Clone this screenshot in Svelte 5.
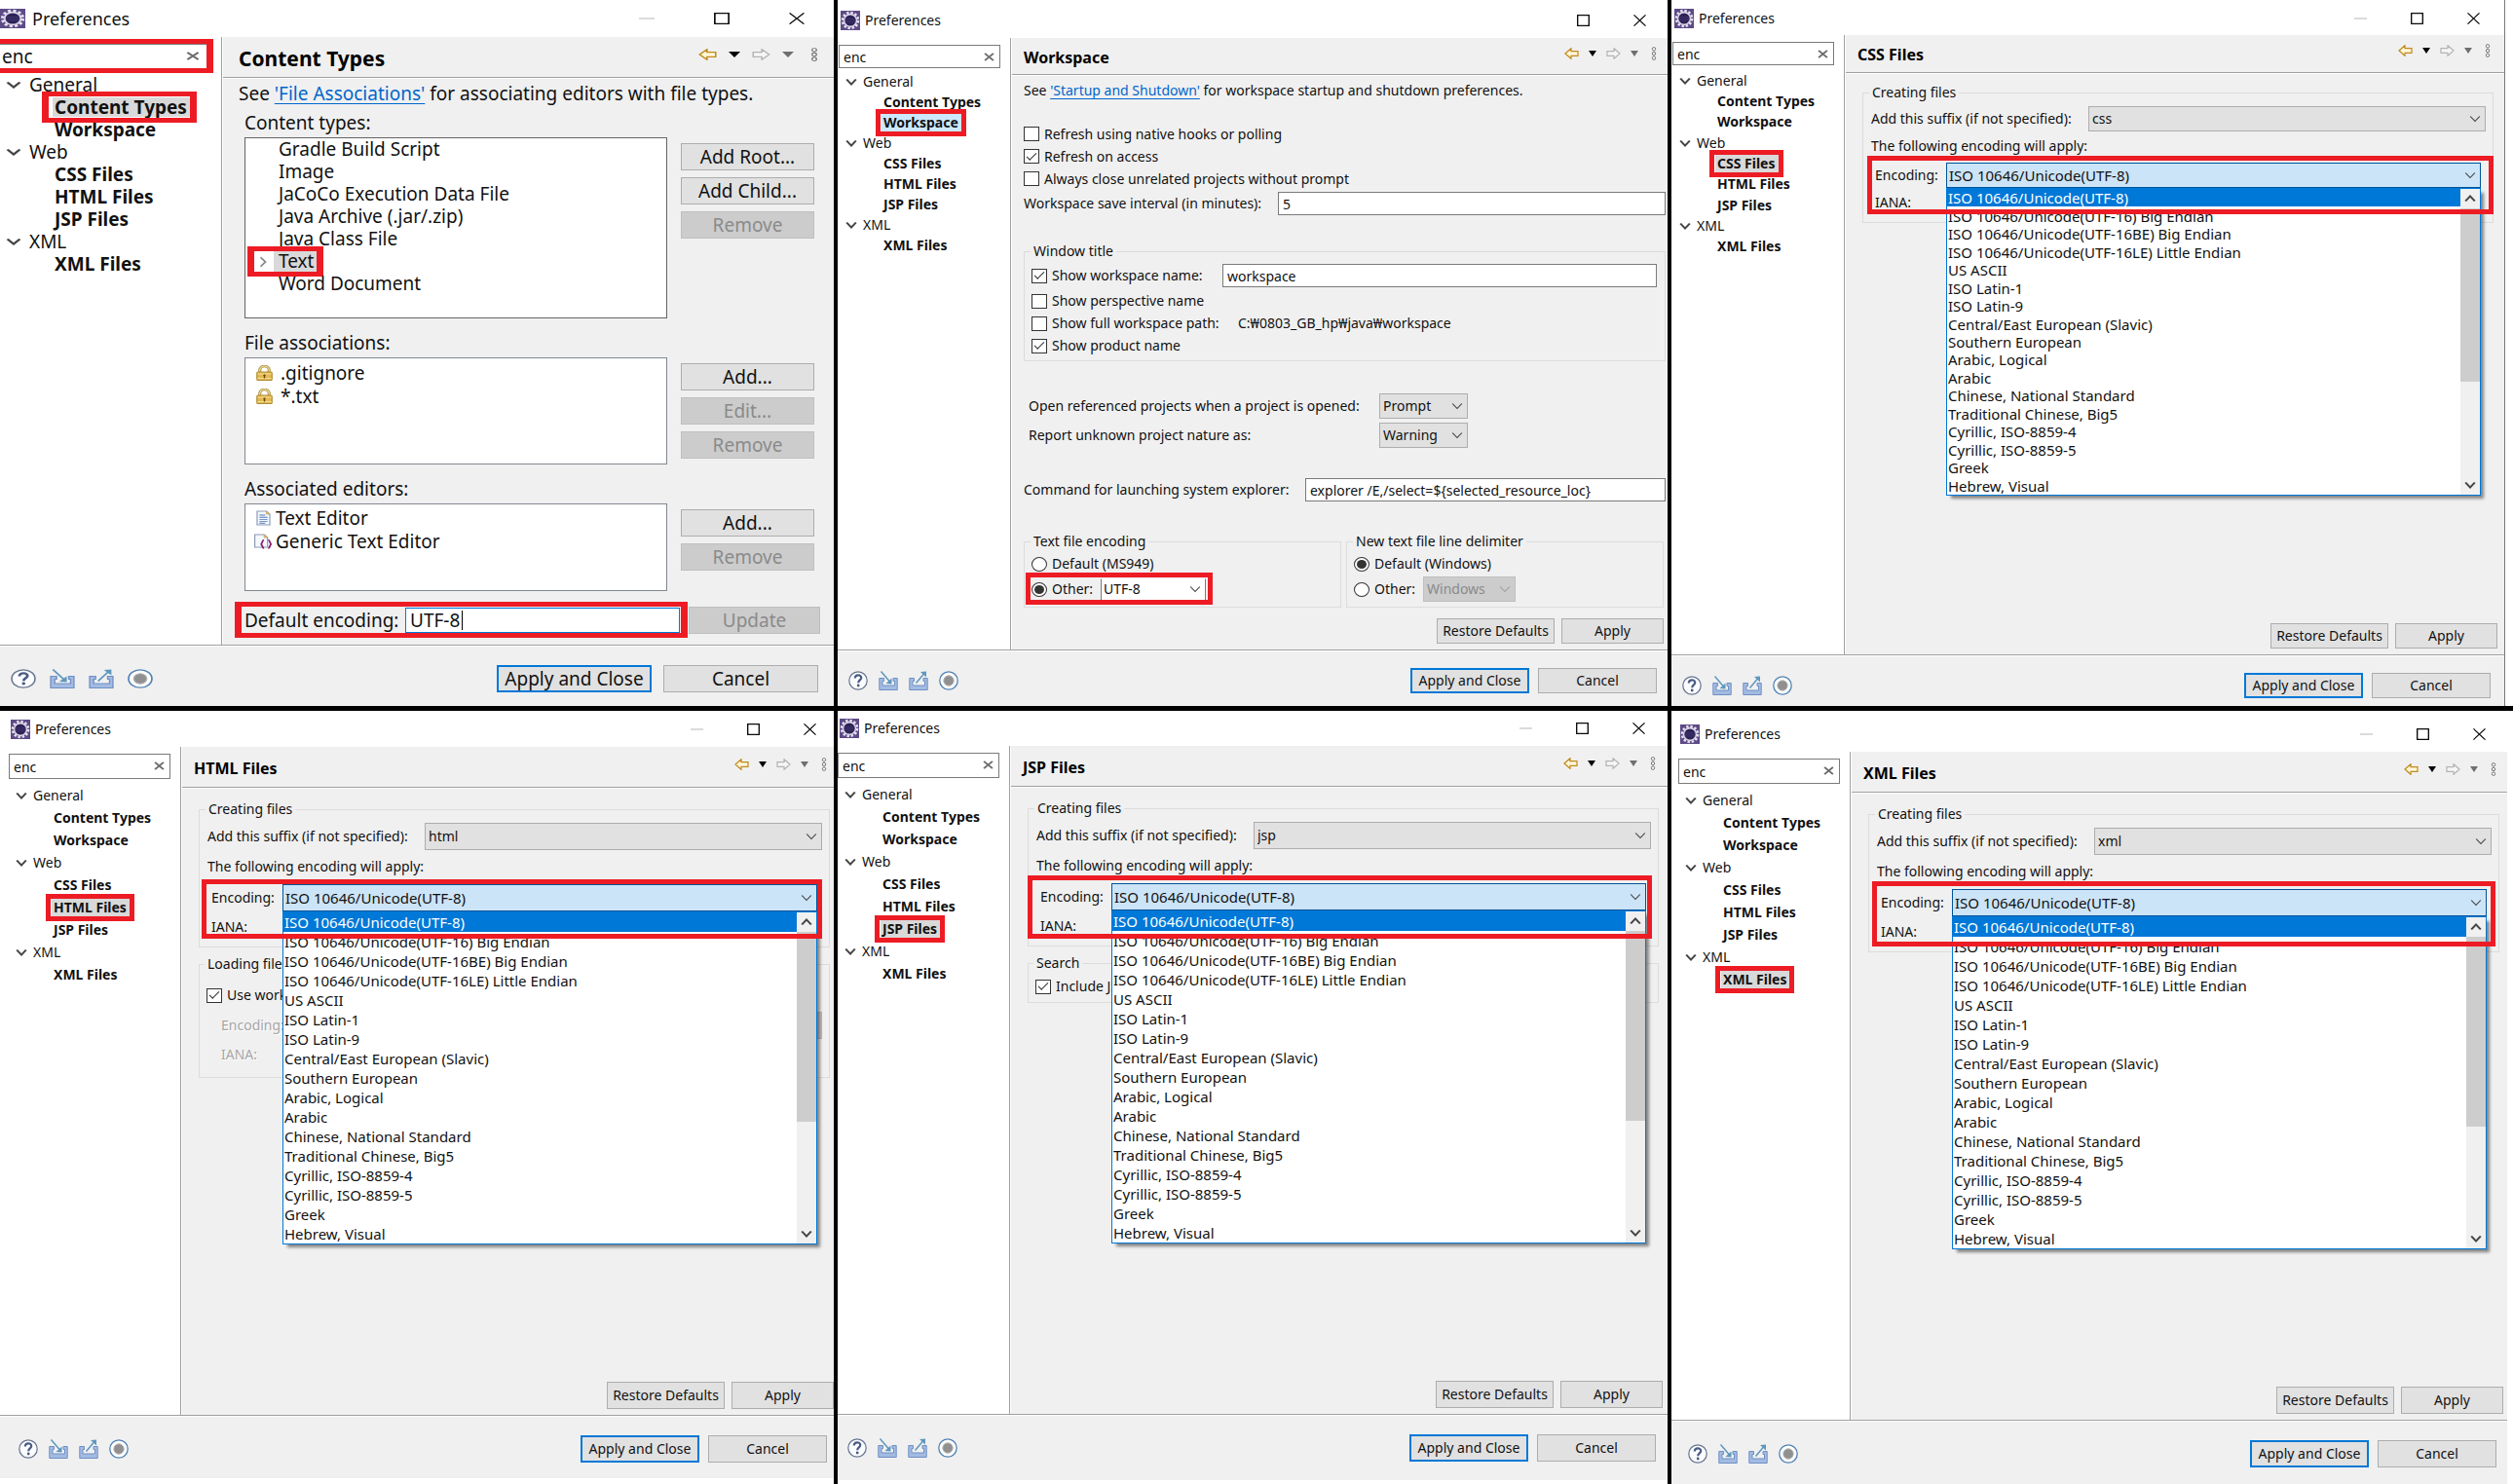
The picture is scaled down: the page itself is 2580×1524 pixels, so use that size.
<script lang="ts">
  type PageKind = 'content-types' | 'workspace' | 'files';

  interface Win {
    id: string;
    title: string;
    kind: PageKind;
    suffix?: string;
    extra?: 'loading' | 'search';
    minimize?: boolean;
  }

  const windows: Win[] = [
    { id: 'types', title: 'Content Types', kind: 'content-types', minimize: true },
    { id: 'workspace', title: 'Workspace', kind: 'workspace' },
    { id: 'css', title: 'CSS Files', kind: 'files', suffix: 'css', minimize: true },
    { id: 'html', title: 'HTML Files', kind: 'files', suffix: 'html', extra: 'loading', minimize: true },
    { id: 'jsp', title: 'JSP Files', kind: 'files', suffix: 'jsp', extra: 'search', minimize: true },
    { id: 'xml', title: 'XML Files', kind: 'files', suffix: 'xml', minimize: true },
  ];

  const tree = [
    { name: 'General', children: ['Content Types', 'Workspace'] },
    { name: 'Web', children: ['CSS Files', 'HTML Files', 'JSP Files'] },
    { name: 'XML', children: ['XML Files'] },
  ];

  const contentTypes = [
    'Gradle Build Script',
    'Image',
    'JaCoCo Execution Data File',
    'Java Archive (.jar/.zip)',
    'Java Class File',
    'Text',
    'Word Document',
  ];

  const encodings = [
    'ISO 10646/Unicode(UTF-8)',
    'ISO 10646/Unicode(UTF-16) Big Endian',
    'ISO 10646/Unicode(UTF-16BE) Big Endian',
    'ISO 10646/Unicode(UTF-16LE) Little Endian',
    'US ASCII',
    'ISO Latin-1',
    'ISO Latin-9',
    'Central/East European (Slavic)',
    'Southern European',
    'Arabic, Logical',
    'Arabic',
    'Chinese, National Standard',
    'Traditional Chinese, Big5',
    'Cyrillic, ISO-8859-4',
    'Cyrillic, ISO-8859-5',
    'Greek',
    'Hebrew, Visual',
  ];
</script>

{#snippet chevron(cls: string)}
  <svg class="chevron {cls}" viewBox="0 0 10 10" preserveAspectRatio="none" aria-hidden="true">
    <path d="M1 2.5 5 7.5 9 2.5" fill="none" stroke="currentColor" />
  </svg>
{/snippet}

{#snippet appIcon()}
  <svg class="app-icon" viewBox="0 0 20 20" preserveAspectRatio="none" aria-hidden="true">
    <rect width="20" height="20" fill="#5d4a86" />
    <circle cx="10" cy="10" r="8" fill="none" stroke="#e6e2ee" stroke-width="2.6" stroke-dasharray="2.4 1.8" />
    <circle cx="10" cy="10" r="6.4" fill="#2c2255" stroke="#dcd6ea" stroke-width="1.6" />
    <path d="M4.6 8.4h10.8M4.2 10.2h11.6M4.6 12h10.8" stroke="#463a73" stroke-width=".7" />
  </svg>
{/snippet}

{#snippet select(id: string, value: string, cls: string, disabled: boolean)}
  <span class="select {cls}" class:disabled>
    <select {id} {disabled}><option>{value}</option></select>
    {@render chevron('drop')}
  </span>
{/snippet}

{#snippet lock()}
  <svg class="file-icon" viewBox="0 0 16 16" preserveAspectRatio="none" aria-hidden="true">
    <path d="M4 8V5a4 4 0 0 1 8 0v3" fill="none" stroke="#a98c3b" stroke-width="2.6" />
    <path d="M4 8V5a4 4 0 0 1 8 0v3" fill="none" stroke="#f3e3a4" stroke-width="1" />
    <rect x="1.5" y="7" width="13" height="8.5" rx="1" fill="#e3b94f" stroke="#b08a35" />
    <path d="M2 9h12M2 13.5h12" stroke="#f6df93" />
    <path d="M8 9.5v4M7 10.5h2" stroke="#6b4a10" stroke-width="1.2" />
  </svg>
{/snippet}

{#snippet textFile()}
  <svg class="file-icon" viewBox="0 0 16 16" preserveAspectRatio="none" aria-hidden="true">
    <path d="M2.5 1h8l3 3v11h-11z" fill="#f4f8ff" stroke="#8d9cb5" />
    <path d="M10.5 1v3h3z" fill="#e6c679" stroke="#b9984f" stroke-width=".6" />
    <path d="M4.5 5h5M4.5 7.2h7M4.5 9.4h7M4.5 11.6h7M4.5 13.3h5" stroke="#4c78b8" stroke-width=".9" />
  </svg>
{/snippet}

{#snippet genericFile()}
  <svg class="file-icon" viewBox="0 0 16 16" preserveAspectRatio="none" aria-hidden="true">
    <path d="M.5 1h8l3 3v10h-11z" fill="#f4f8ff" stroke="#8d9cb5" />
    <path d="M8.5 1v3h3z" fill="#e6c679" stroke="#b9984f" stroke-width=".6" />
    <path
      d="M8.5 6.5c-2 0-1 4-3 4.300 2 .2 1 4.200 3 4.200M12 6.500c2 0 1 4 3 4.300-2 .2-1 4.200-3 4.200"
      fill="none"
      stroke="#8a1f6c"
      stroke-width="1.6"
    />
  </svg>
{/snippet}

{#snippet footerIcons()}
  <div class="footer-icons">
    <svg viewBox="0 0 20 20" preserveAspectRatio="none" aria-hidden="true">
      <circle cx="10" cy="10" r="9.2" fill="#fbfcfe" stroke="#66748f" stroke-width="1.2" />
      <path d="M6.8 7.6c0-4.4 6.6-4.2 6.4-.5-.1 2.2-3 2.5-3 5.2" fill="none" stroke="#4a5c85" stroke-width="2.2" />
      <circle cx="10.2" cy="15" r="1.4" fill="#4a5c85" />
    </svg>
    <svg viewBox="0 0 20 20" preserveAspectRatio="none" aria-hidden="true">
      <path d="M.8 7.5h4.700v3h-1.500v4.500h12.500v-4.500H15v-3h4.200v12H.8z" fill="#a3bbe2" stroke="#6f8fc4" />
      <path d="M2.5.5 11.5 11" stroke="#5e97bd" stroke-width="1.5" />
      <path d="M13.5 13.5v-6l-6 5.500z" fill="#5e97bd" />
    </svg>
    <svg viewBox="0 0 20 20" preserveAspectRatio="none" aria-hidden="true">
      <path d="M.8 7.5h4.700v3h-1.500v4.500h12.500v-4.500H15v-3h4.200v12H.8z" fill="#a3bbe2" stroke="#6f8fc4" />
      <path d="M7.5 12.5 15.5 3" stroke="#5e97bd" stroke-width="1.5" />
      <path d="M18 .5v6L12 1z" fill="#5e97bd" />
    </svg>
    <svg viewBox="0 0 20 20" preserveAspectRatio="none" aria-hidden="true">
      <circle cx="10" cy="10" r="9.2" fill="#fff" stroke="#4f82b3" stroke-width="1.3" />
      <circle cx="10" cy="10" r="5.2" fill="#909090" stroke="#b4b4b4" />
    </svg>
  </div>
{/snippet}

{#snippet contentTypesPage()}
  <div class="types-page">
    <p class="hint">See <a href="#file-associations">'File Associations'</a> for associating editors with file types.</p>

    <div class="section">
      <h3>Content types:</h3>
      <ul class="list types-list">
        {#each contentTypes as type}
          <li class:picked={type === 'Text'}>
            {#if type === 'Text'}{@render chevron('closed')}{/if}
            <span>{type}</span>
          </li>
        {/each}
      </ul>
      <div class="side-buttons">
        <button>Add Root...</button>
        <button>Add Child...</button>
        <button disabled>Remove</button>
      </div>
    </div>

    <div class="section">
      <h3>File associations:</h3>
      <ul class="list associations">
        <li>{@render lock()}<span>.gitignore</span></li>
        <li>{@render lock()}<span>*.txt</span></li>
      </ul>
      <div class="side-buttons">
        <button>Add...</button>
        <button disabled>Edit...</button>
        <button disabled>Remove</button>
      </div>
    </div>

    <div class="section">
      <h3>Associated editors:</h3>
      <ul class="list editors">
        <li>{@render textFile()}<span>Text Editor</span></li>
        <li>{@render genericFile()}<span>Generic Text Editor</span></li>
      </ul>
      <div class="side-buttons">
        <button>Add...</button>
        <button disabled>Remove</button>
      </div>
    </div>

    <div class="default-encoding">
      <div class="encoding-entry">
        <label for="default-encoding">Default encoding:</label>
        <input id="default-encoding" type="text" value="UTF-8" />
        <i class="caret"></i>
      </div>
      <button disabled>Update</button>
    </div>
  </div>
{/snippet}

{#snippet workspacePage()}
  <div class="workspace-page">
    <p class="hint">
      See <a href="#startup">'Startup and Shutdown'</a> for workspace startup and shutdown preferences.
    </p>

    <div class="checks">
      <label><input type="checkbox" />Refresh using native hooks or polling</label>
      <label><input type="checkbox" checked />Refresh on access</label>
      <label><input type="checkbox" />Always close unrelated projects without prompt</label>
    </div>
    <div class="field save">
      <label for="save-interval">Workspace save interval (in minutes):</label>
      <input id="save-interval" type="text" value="5" />
    </div>

    <fieldset class="window-title">
      <legend>Window title</legend>
      <div class="field">
        <label><input type="checkbox" checked />Show workspace name:</label>
        <input type="text" value="workspace" aria-label="Workspace name" />
      </div>
      <label><input type="checkbox" />Show perspective name</label>
      <div class="path">
        <label><input type="checkbox" />Show full workspace path:</label>
        <span>C:₩0803_GB_hp₩java₩workspace</span>
      </div>
      <label><input type="checkbox" checked />Show product name</label>
    </fieldset>

    <div class="choices">
      <label for="open-referenced">Open referenced projects when a project is opened:</label>
      {@render select('open-referenced', 'Prompt', '', false)}
      <label for="unknown-nature">Report unknown project nature as:</label>
      {@render select('unknown-nature', 'Warning', '', false)}
    </div>

    <div class="field command">
      <label for="explorer">Command for launching system explorer:</label>
      <input id="explorer" type="text" value={'explorer /E,/select=${selected_resource_loc}'} />
    </div>

    <div class="pair">
      <fieldset>
        <legend>Text file encoding</legend>
        <label><input type="radio" name="encoding" />Default (MS949)</label>
        <div class="other marked">
          <label><input type="radio" name="encoding" checked />Other:</label>
          {@render select('text-encoding', 'UTF-8', 'white', false)}
        </div>
      </fieldset>
      <fieldset>
        <legend>New text file line delimiter</legend>
        <label><input type="radio" name="delimiter" checked />Default (Windows)</label>
        <div class="other">
          <label><input type="radio" name="delimiter" />Other:</label>
          {@render select('delimiter', 'Windows', '', true)}
        </div>
      </fieldset>
    </div>
  </div>
{/snippet}

{#snippet filesPage(win: Win)}
  <div class="files-page">
    <fieldset class="creating">
      <legend>Creating files</legend>
      <div class="suffix-row">
        <label for="suffix-{win.id}">Add this suffix (if not specified):</label>
        {@render select(`suffix-${win.id}`, win.suffix ?? '', '', false)}
      </div>
      <p>The following encoding will apply:</p>
      <div class="encoding">
        <label for="encoding-{win.id}">Encoding:</label>
        <div class="combo">
          {@render select(`encoding-${win.id}`, encodings[0], 'open', false)}
          <div class="popup">
            <ul>
              {#each encodings as encoding, i}
                <li class:current={i === 0}>{encoding}</li>
              {/each}
            </ul>
            <div class="scrollbar">
              {@render chevron('up')}
              <div class="track"><div class="thumb"></div></div>
              {@render chevron('down')}
            </div>
          </div>
        </div>
        <span class="iana">IANA:</span>
      </div>
    </fieldset>

    {#if win.extra === 'loading'}
      <fieldset class="loading">
        <legend>Loading files</legend>
        <label><input type="checkbox" checked />Use workspace encoding</label>
        <div class="off">
          <label for="load-encoding">Encoding:</label>
          {@render select('load-encoding', '', '', true)}
        </div>
        <div class="off">IANA:</div>
      </fieldset>
    {:else if win.extra === 'search'}
      <fieldset class="search-group">
        <legend>Search</legend>
        <label><input type="checkbox" checked />Include JSP matches</label>
      </fieldset>
    {/if}
  </div>
{/snippet}

<main class="board">
  {#each windows as win}
    <section class="cell {win.id}">
      <div class="window">
        <header class="titlebar">
          {@render appIcon()}
          <span>Preferences</span>
          <div class="controls">
            {#if win.minimize}
              <svg viewBox="0 0 13 13" preserveAspectRatio="none"><path d="M0 6.5h13" stroke="#b4b4b4" /></svg>
            {/if}
            <svg viewBox="0 0 13 13" preserveAspectRatio="none">
              <rect x=".7" y=".7" width="11.6" height="11.6" fill="none" stroke="#000" stroke-width="1.3" />
            </svg>
            <svg viewBox="0 0 13 13" preserveAspectRatio="none">
              <path d="M.5.5l12 12M12.5.5l-12 12" stroke="#000" stroke-width="1.2" />
            </svg>
          </div>
        </header>

        <div class="body">
          <nav class="sidebar">
            <div class="search">
              <input type="text" value="enc" aria-label="Filter" />
              <svg class="clear" viewBox="0 0 10 10" preserveAspectRatio="none">
                <path d="M1 1l8 8M9 1 1 9" stroke="#6d6d6d" stroke-width="1.8" />
              </svg>
            </div>
            <ul class="tree">
              {#each tree as group}
                <li class="group">{@render chevron('open-node')}{group.name}</li>
                {#each group.children as child}
                  <li class="leaf"><span class:selected={child === win.title}>{child}</span></li>
                {/each}
              {/each}
            </ul>
          </nav>

          <div class="page">
            <div class="page-head">
              <h2>{win.title}</h2>
              <div class="toolbar">
                <svg class="arrow" viewBox="0 0 15 12" preserveAspectRatio="none">
                  <path d="M1 6 7 .7v2.900h7v4.800H7v2.900z" fill="#fff6d8" stroke="#c08a1e" stroke-width="1.2" />
                </svg>
                <svg class="tri" viewBox="0 0 8 6" preserveAspectRatio="none"><path d="M0 0h8L4 6z" fill="#000" /></svg>
                <svg class="arrow" viewBox="0 0 15 12" preserveAspectRatio="none">
                  <path d="M14 6 8 .7v2.900H1v4.800h7v2.900z" fill="#f6f6f6" stroke="#b4b4b4" stroke-width="1.2" />
                </svg>
                <svg class="tri" viewBox="0 0 8 6" preserveAspectRatio="none"><path d="M0 0h8L4 6z" fill="#6f6f6f" /></svg>
                <svg class="dots" viewBox="0 0 6 14" preserveAspectRatio="none">
                  <g fill="#fff" stroke="#666" stroke-width=".9">
                    <circle cx="3" cy="2.3" r="1.7" />
                    <circle cx="3" cy="7" r="1.7" />
                    <circle cx="3" cy="11.7" r="1.7" />
                  </g>
                </svg>
              </div>
            </div>

            {#if win.kind === 'content-types'}
              {@render contentTypesPage()}
            {:else}
              {#if win.kind === 'workspace'}
                {@render workspacePage()}
              {:else}
                {@render filesPage(win)}
              {/if}
              <div class="page-buttons">
                <button class="restore">Restore Defaults</button>
                <button class="apply">Apply</button>
              </div>
            {/if}
          </div>
        </div>

        <footer>
          <div class="footer-row">
            {@render footerIcons()}
            <button class="default">Apply and Close</button>
            <button>Cancel</button>
          </div>
        </footer>
      </div>
    </section>
  {/each}
</main>

<style>
  :global(body) {
    margin: 0;
    background: #000;
  }

  .board {
    display: grid;
    grid-template-columns: 856fr 852fr 864fr;
    grid-template-rows: 725fr 794fr;
    gap: 5px 4px;
    min-height: 100vh;
    font-family: "Noto Sans", "Open Sans", sans-serif;
    color: #111;
  }

  .board *,
  .board *::after,
  .board *::before {
    box-sizing: border-box;
  }

  ul,
  p,
  h2,
  h3,
  fieldset {
    margin: 0;
    padding: 0;
    list-style: none;
  }

  /* shared metrics, then the ones each window overrides */
  .cell {
    --font: 14px;
    --head-font: 16px;
    --top: 0px;
    --shift: 0px;
    --edge: 11px;
    --bar: 36px;
    --head: 42px;
    --tree: 207px;
    --tree-gap: 5px;
    --ctl: 28px;
    --search: 26px;
    --side: 178px;
    --foot: 71px;
    --icon: 20px;
    --note: 33px;
    --iana: 31px;
    --popup: 342px;
    --red: #ed1c24;
    display: flex;
    min-width: 0;
    background: #fff;
    font-size: var(--font);
    line-height: 20px;
  }

  .cell.types {
    --font: 19px;
    --head-font: 21px;
    --edge: 16px;
    --bar: 38px;
    --search: 25px;
    --side: 228px;
    --foot: 62px;
    --icon: 26px;
  }

  .cell.workspace {
    --top: 3px;
    --head: 38px;
    --tree: 189px;
    --tree-gap: 3px;
    --ctl: 26px;
    --search: 24px;
    --foot: 57px;
  }

  .cell.css {
    --top: 1px;
    --edge: 14px;
    --bar: 35px;
    --head: 39px;
    --tree: 192px;
    --ctl: 26px;
    --search: 24px;
    --foot: 52px;
    --note: 30px;
    --iana: 30px;
    --popup: 316px;
    padding-right: 8px;
  }

  .cell.html {
    --top: 1px;
    --shift: 8px;
    --edge: 7px;
    --foot: 70px;
  }

  .cell.jsp {
    --shift: -1px;
    --edge: 12px;
  }

  .cell.xml {
    --top: 6px;
    --shift: 6px;
    --foot: 65px;
    padding-right: 6px;
  }

  .css .window {
    border-right: 1px solid #777;
  }

  .window {
    display: flex;
    flex-direction: column;
    flex: 1;
    min-width: 0;
    padding-top: var(--top);
    overflow: hidden;
  }

  .titlebar {
    display: flex;
    align-items: center;
    height: var(--bar);
    padding: 0 calc(var(--edge) + 11px) 0 calc(var(--shift) + 3px);
  }

  .types .titlebar {
    padding: 0 30px 0 0;
    font-size: 18px;
  }

  .app-icon {
    width: var(--icon);
    height: 20px;
    margin-right: 5px;
  }

  .types .app-icon {
    margin-right: 7px;
  }

  .controls {
    display: flex;
    gap: 45px;
    margin-left: auto;
  }

  .controls svg {
    width: 13px;
    height: 12px;
  }

  .types .controls {
    gap: 61px;
  }

  .types .controls svg {
    width: 16px;
  }

  .body {
    display: flex;
    flex: 1;
    min-height: 0;
    border-bottom: 1px solid #a0a0a0;
  }

  .sidebar {
    flex: none;
    width: calc(var(--side) + var(--shift));
    padding: 7px 10px 0 calc(var(--shift) + 1px);
    border-right: 1px solid #a0a0a0;
  }

  .types .sidebar {
    padding: 7px 15px 0 0;
  }

  .search {
    position: relative;
    margin-bottom: var(--tree-gap);
  }

  .search input {
    display: block;
    width: 100%;
    padding: 0 4px;
  }

  .types .search input {
    border-width: 1px 0 0;
    padding: 0 2px;
  }

  .types .search::after {
    content: "";
    position: absolute;
    inset: -5px -7px -5px 0;
    border: 5px solid var(--red);
    border-width: 5px 7px 5px 0;
  }

  .clear {
    position: absolute;
    top: 8px;
    right: 6px;
    width: 11px;
    height: 9px;
  }

  .types .clear {
    right: 7px;
    width: 14px;
  }

  .tree {
    display: grid;
    grid-auto-rows: 1fr;
    height: var(--tree);
  }

  .tree li {
    display: flex;
    align-items: center;
  }

  .group {
    gap: 6px;
    padding-left: 7px;
  }

  .types .group {
    gap: 8px;
    padding-left: 6px;
  }

  .leaf {
    padding-left: 44px;
    font-weight: 700;
    white-space: nowrap;
  }

  .types .leaf {
    padding-left: 54px;
  }

  .leaf span {
    position: relative;
    padding: 0 3px 0 2px;
  }

  .leaf .selected {
    z-index: 1;
    background: #d9d9d9;
  }

  .workspace .leaf .selected {
    background: #cce8ff;
  }

  .leaf .selected::after {
    content: "";
    position: absolute;
    inset: -4px -5px -4px -6px;
    border: 5px solid var(--red);
  }

  .types .leaf .selected::after {
    inset: -6px -7px -6px -11px;
    border-width: 5px 7px;
  }

  .chevron {
    flex: none;
    width: 12px;
    height: 10px;
    color: #444;
  }

  .open-node {
    stroke-width: 1.8;
  }

  .types .open-node {
    width: 16px;
  }

  .closed {
    color: #8a8a8a;
    stroke-width: 1.6;
    transform: rotate(-90deg);
  }

  .up {
    transform: rotate(180deg);
  }

  .up,
  .down {
    margin: 5px 4px;
    stroke-width: 1.8;
  }

  .page {
    display: flex;
    flex-direction: column;
    flex: 1;
    min-width: 0;
    background: #f0f0f0;
    border-left: 1px solid #fff;
  }

  .page-head {
    display: flex;
    align-items: center;
    flex: none;
    height: var(--head);
    padding: 2px var(--edge) 0 12px;
    border-bottom: 1px solid #a0a0a0;
    box-shadow: 0 1px 0 #fff;
  }

  .types .page-head {
    padding-left: 16px;
  }

  h2 {
    font-size: var(--head-font);
    font-weight: 700;
    color: #000;
  }

  .toolbar {
    display: flex;
    align-items: center;
    gap: 10px;
    margin: 0 0 8px auto;
  }

  .types .toolbar {
    gap: 12px;
  }

  .arrow {
    width: 15px;
    height: 12px;
  }

  .tri {
    width: 8px;
    height: 6px;
  }

  .dots {
    width: 6px;
    height: 14px;
    margin-left: 3px;
  }

  .types .arrow {
    width: 19px;
  }

  .types .tri {
    width: 12px;
  }

  .types .dots {
    width: 8px;
    margin-left: 5px;
  }

  /* controls */
  input,
  select,
  button {
    font: inherit;
    color: #111;
  }

  input[type="text"] {
    min-width: 0;
    height: 24px;
    padding: 0 4px;
    border: 1px solid #7a7a7a;
    border-radius: 0;
    background: #fff;
    outline: none;
  }

  .search input[type="text"] {
    height: var(--search);
  }

  input[type="checkbox"],
  input[type="radio"] {
    appearance: none;
    display: grid;
    place-items: center;
    flex: none;
    width: 16px;
    height: 15px;
    margin: 0 5px 0 0;
    border: 1px solid #333;
    background: #fff;
  }

  input[type="radio"] {
    border-radius: 50%;
  }

  input[type="radio"]:checked::before {
    content: "";
    width: 10px;
    height: 9px;
    border-radius: 50%;
    background: #333;
  }

  input[type="checkbox"]:checked::before {
    content: "";
    width: 10px;
    height: 5px;
    margin-bottom: 3px;
    border: solid #333;
    border-width: 0 0 1px 1px;
    transform: rotate(-45deg);
  }

  label {
    display: flex;
    align-items: center;
    white-space: nowrap;
  }

  button {
    height: var(--ctl);
    padding: 0;
    border: 1px solid #adadad;
    border-radius: 0;
    background: #e1e1e1;
    white-space: nowrap;
  }

  button:disabled {
    border-color: #bfbfbf;
    background: #ccc;
    color: #8a8a8a;
  }

  .select {
    position: relative;
    display: flex;
    min-width: 0;
  }

  .select select {
    appearance: none;
    width: 100%;
    height: var(--ctl);
    padding: 0 3px;
    border: 1px solid #adadad;
    border-radius: 0;
    background: #e1e1e1;
  }

  .select select:disabled {
    border-color: #bfbfbf;
    background: #ccc;
    color: #8a8a8a;
    opacity: 1;
  }

  .select.open select {
    padding: 0 2px;
    border-color: #005499;
    background: #cce4f7;
    font-size: 15px;
  }

  .select.white select {
    height: 23px;
    padding: 0 2px;
    border-color: #fff #7a7a7a;
    background: #fff;
  }

  .drop {
    position: absolute;
    top: calc(50% - 5px);
    right: 5px;
  }

  .disabled .drop {
    color: #a0a0a0;
  }

  fieldset {
    min-width: 0;
    border: 1px solid #dcdcdc;
  }

  legend {
    padding: 0 3px;
    line-height: 20px;
  }

  a {
    color: #0066cc;
    text-underline-offset: 3px;
  }

  .hint {
    line-height: 24px;
    white-space: nowrap;
  }

  /* Content Types */
  .types-page {
    padding: 4px 20px 0 22px;
  }

  .types-page .hint {
    margin-left: -6px;
    margin-bottom: 6px;
  }

  .section {
    display: grid;
    grid-template-columns: 1fr 137px;
    column-gap: 14px;
    row-gap: 3px;
    margin-bottom: 13px;
  }

  h3 {
    grid-column: 1 / -1;
    font-size: var(--font);
    font-weight: 400;
    line-height: 24px;
  }

  .list {
    border: 1px solid #828790;
    background: #fff;
  }

  .list li {
    display: flex;
    align-items: center;
    height: 24px;
  }

  .types-list {
    height: 186px;
    border-color: #646464;
  }

  .types-list li {
    position: relative;
    width: max-content;
    height: 23px;
    padding-left: 29px;
  }

  .types-list span {
    padding: 0 5px;
    line-height: 21px;
  }

  .types-list .picked span {
    background: #d9d9d9;
  }

  .picked .chevron {
    position: absolute;
    left: 12px;
  }

  .picked::after {
    content: "";
    position: absolute;
    inset: -4px -5px -4px 2px;
    border: 5px solid var(--red);
    border-width: 5px 7px;
  }

  .associations {
    height: 110px;
    padding: 3px 10px;
  }

  .associations li {
    gap: 7px;
  }

  .editors {
    height: 90px;
    padding: 2px 9px;
  }

  .editors li {
    gap: 3px;
  }

  .file-icon {
    width: 19px;
    height: 16px;
  }

  .side-buttons {
    display: flex;
    flex-direction: column;
    gap: 7px;
    padding-top: 6px;
  }

  .default-encoding {
    display: grid;
    grid-template-columns: 1fr 135px;
    align-items: center;
    gap: 9px;
    margin: 16px -6px 0 0;
  }

  .encoding-entry {
    position: relative;
    z-index: 1;
    display: grid;
    grid-template-columns: 165px 1fr;
  }

  .encoding-entry input[type="text"] {
    height: 26px;
    border-color: #0078d7;
  }

  .encoding-entry::after {
    content: "";
    position: absolute;
    inset: -6px -8px -5px -10px;
    border: 5px solid var(--red);
    border-width: 5px 7px;
  }

  .caret {
    position: absolute;
    top: 3px;
    left: 223px;
    width: 1px;
    height: 20px;
    background: #000;
  }

  /* Workspace */
  .workspace-page {
    padding: 4px 2px 0 12px;
  }

  .checks {
    display: grid;
    grid-auto-rows: 23px;
    margin: 21px 0 2px;
  }

  .field {
    display: grid;
    align-items: center;
  }

  .save {
    grid-template-columns: 261px 1fr;
  }

  .window-title {
    display: grid;
    row-gap: 1px;
    margin-top: 27px;
    padding: 0 8px 4px 7px;
  }

  .window-title legend,
  .pair legend {
    margin-left: -1px;
  }

  .window-title .field {
    grid-template-columns: 196px 1fr;
    margin: 3px 0 2px;
  }

  .window-title > label,
  .path {
    height: 22px;
  }

  .path {
    display: grid;
    grid-template-columns: 212px 1fr;
    align-items: center;
  }

  .choices {
    display: grid;
    grid-template-columns: 360px 91px;
    row-gap: 4px;
    margin-top: 33px;
    padding-left: 5px;
  }

  .command {
    grid-template-columns: 289px 1fr;
    margin-top: 31px;
  }

  .pair {
    display: grid;
    grid-template-columns: 326px 326px;
    gap: 5px;
    margin-top: 31px;
  }

  .pair fieldset {
    padding: 1px 7px 4px;
  }

  .pair fieldset > label {
    height: 24px;
  }

  .other {
    position: relative;
    display: grid;
    grid-template-columns: 71px 108px;
    align-items: center;
    height: 28px;
  }

  .pair fieldset + fieldset .other {
    grid-template-columns: 71px 95px;
  }

  .marked::after {
    content: "";
    position: absolute;
    top: -3px;
    left: -6px;
    width: 192px;
    height: 33px;
    border: 5px solid var(--red);
  }

  /* CSS, HTML, JSP and XML files */
  .files-page {
    padding: 12px calc(var(--edge) - 3px) 0 17px;
  }

  .css .files-page {
    padding-top: 10px;
  }

  .creating {
    padding: 4px 7px 5px 8px;
  }

  .creating legend,
  .loading legend,
  .search-group legend {
    margin-left: -2px;
  }

  .suffix-row {
    display: grid;
    grid-template-columns: 223px 1fr;
  }

  .creating p {
    padding-bottom: 2px;
    line-height: var(--note);
  }

  .encoding {
    position: relative;
    display: grid;
    grid-template-columns: 73px 1fr;
    padding: 0 5px 0 4px;
  }

  .combo {
    position: relative;
  }

  .iana {
    line-height: var(--iana);
  }

  .encoding::after {
    content: "";
    position: absolute;
    z-index: 3;
    border: 5px solid var(--red);
  }

  .css .encoding::after {
    inset: -7px -8px 3px -4px;
  }

  .html .encoding::after {
    inset: -5px 0 3px -6px;
  }

  .jsp .encoding::after {
    inset: -8px -1px 2px -9px;
  }

  .xml .encoding::after {
    inset: -8px -4px 0 -5px;
  }

  .popup {
    position: absolute;
    z-index: 2;
    top: 100%;
    left: 0;
    display: flex;
    width: 100%;
    height: var(--popup);
    border: 1px solid #0078d7;
    background: #fff;
    box-shadow: 4px 4px 3px -1px rgba(0, 0, 0, 0.45);
    font-size: 15px;
  }

  .popup ul {
    display: flex;
    flex: 1;
    flex-direction: column;
  }

  .popup li {
    display: flex;
    flex: 1;
    align-items: center;
    min-height: 0;
    padding-left: 1px;
    white-space: nowrap;
  }

  .popup .current {
    background: #0078d7;
    color: #fff;
  }

  .scrollbar {
    display: flex;
    flex-direction: column;
    width: 20px;
    background: #f0f0f0;
  }

  .track {
    flex: 1;
  }

  .thumb {
    height: 65%;
    background: #cdcdcd;
  }

  .loading,
  .search-group {
    margin-top: 7px;
  }

  .loading {
    padding: 6px 7px 8px;
  }

  .loading > label {
    height: 32px;
  }

  .off {
    display: grid;
    grid-template-columns: 73px 1fr;
    align-items: center;
    height: 30px;
    padding-left: 15px;
    color: #a6a6a6;
    text-shadow: 1px 1px 0 #fff;
  }

  .search-group {
    padding: 3px 7px 5px;
  }

  .search-group label {
    height: 22px;
  }

  .page-buttons {
    display: flex;
    justify-content: flex-end;
    gap: 7px;
    margin: auto calc(var(--edge) - 7px) 6px 0;
  }

  .restore {
    width: 121px;
  }

  .apply {
    width: 105px;
  }

  footer {
    height: var(--foot);
    padding: 19px var(--edge) 0 calc(var(--shift) + 11px);
    border-top: 1px solid #fff;
    background: #f0f0f0;
  }

  .workspace footer,
  .css footer {
    padding-top: 17px;
  }

  .html footer {
    border-bottom: 6px solid #fff;
  }

  .jsp footer {
    border-bottom: 4px solid #fff;
  }

  .footer-row {
    display: flex;
    gap: 9px;
  }

  .footer-row button {
    width: 122px;
  }

  .types .footer-row {
    gap: 12px;
  }

  .types .footer-row button {
    width: 159px;
  }

  .footer-row .default {
    border: 2px solid #0078d7;
  }

  .footer-icons {
    display: flex;
    align-items: center;
    gap: 11px;
    margin-right: auto;
  }

  .footer-icons svg {
    width: 20px;
    height: 20px;
  }

  .types .footer-icons {
    gap: 14px;
  }

  .types .footer-icons svg {
    width: 26px;
  }
</style>
